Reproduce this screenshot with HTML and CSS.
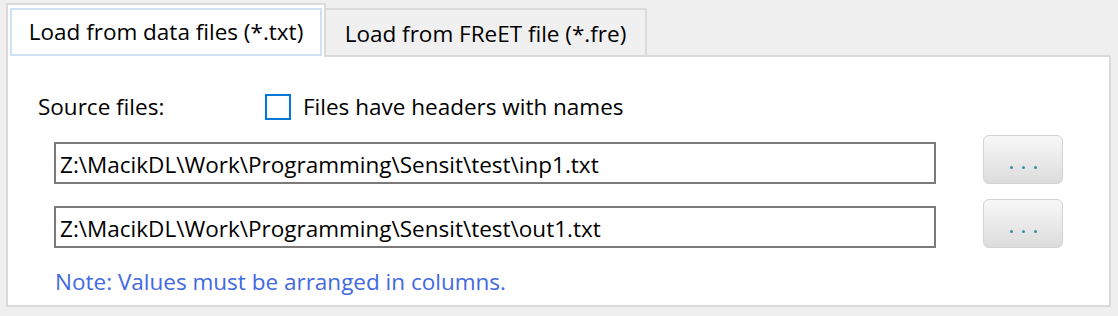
FILE: index.html
```html
<!DOCTYPE html>
<html>
<head>
  <meta charset="UTF-8">
  <title>Load data</title>
  <link rel="stylesheet" href="styles.css">
</head>
<body>
  <div class="tabs">
    <div class="tab active"><span class="focus">Load from data files (*.txt)</span></div>
    <div class="tab">Load from FReET file (*.fre)</div>
  </div>

  <div class="panel">
    <div class="head-row">
      <span class="label">Source files:</span>
      <label class="check">
        <span class="box"></span>
        Files have headers with names
      </label>
    </div>

    <div class="file-row first">
      <input type="text" class="path" value="Z:\MacikDL\Work\Programming\Sensit\test\inp1.txt">
      <button class="browse"><i></i><i></i><i></i></button>
    </div>

    <div class="file-row">
      <input type="text" class="path" value="Z:\MacikDL\Work\Programming\Sensit\test\out1.txt">
      <button class="browse"><i></i><i></i><i></i></button>
    </div>

    <p class="note">Note: Values must be arranged in columns.</p>
  </div>
</body>
</html>
```
FILE: styles.css
```css
body {
  margin: 0;
  background-color: #efefef;
  font-family: "Open Sans", sans-serif;
  font-size: 22.5px;
  color: #000;
  width: 1118px;
  height: 316px;
}
.tabs {
  display: flex;
  align-items: flex-end;
  padding-left: 6px;
  height: 57px;
  margin-bottom: -2px;
  position: relative;
  z-index: 1;
}
.tab {
  box-sizing: border-box;
  height: 47px;
  width: 321px;
  border: 2px solid #dadada;
  border-left: none;
  border-bottom: none;
  background-color: #f0f0f0;
  display: flex;
  align-items: center;
  justify-content: center;
  line-height: 30px;
  padding-top: 2px;
  margin-bottom: 2px;
}
.tab.active {
  width: 320px;
  height: 54px;
  border-left: 2px solid #dadada;
  background-color: #fff;
  padding: 2px 2px 0 2px;
  margin-bottom: 0;
}
.focus {
  box-sizing: border-box;
  width: 100%;
  height: 48px;
  border: 2px solid #cfe1f3;
  display: flex;
  align-items: center;
  justify-content: center;
}
.panel {
  box-sizing: border-box;
  margin-left: 6px;
  width: 1105px;
  height: 252px;
  border: 2px solid #dadada;
  background-color: #fff;
  padding: 35px 0 0 0;
}
.head-row {
  display: flex;
  align-items: center;
  height: 30px;
  line-height: 30px;
}
.label {
  margin-left: 30px;
  width: 227px;
}
.check {
  display: flex;
  align-items: center;
}
.box {
  box-sizing: border-box;
  width: 26px;
  height: 26px;
  border: 2px solid #0078d7;
  margin-right: 12px;
}
.file-row {
  display: flex;
  align-items: flex-end;
  margin-top: 15px;
  padding-left: 46px;
}
.file-row.first {
  margin-top: 13px;
}
.path {
  box-sizing: border-box;
  width: 882px;
  height: 42px;
  border: 2px solid #7a7a7a;
  padding: 2px 4px 0 4px;
  font-family: "Open Sans", sans-serif;
  font-size: 22.5px;
  color: #000;
  outline: none;
}
.browse {
  box-sizing: border-box;
  width: 80px;
  height: 49px;
  margin-left: 47px;
  border: 1px solid #d3d3d3;
  border-radius: 6px;
  background: linear-gradient(#f8f8f8, #dcdcdc);
  display: flex;
  justify-content: center;
  align-items: flex-end;
  gap: 9px;
  padding: 0 0 14px 0;
}
.browse i {
  width: 3px;
  height: 3px;
  border-radius: 50%;
  background-color: #3f9199;
}
.note {
  margin: 19px 0 0 47px;
  line-height: 30px;
  color: #4169e1;
}
```
